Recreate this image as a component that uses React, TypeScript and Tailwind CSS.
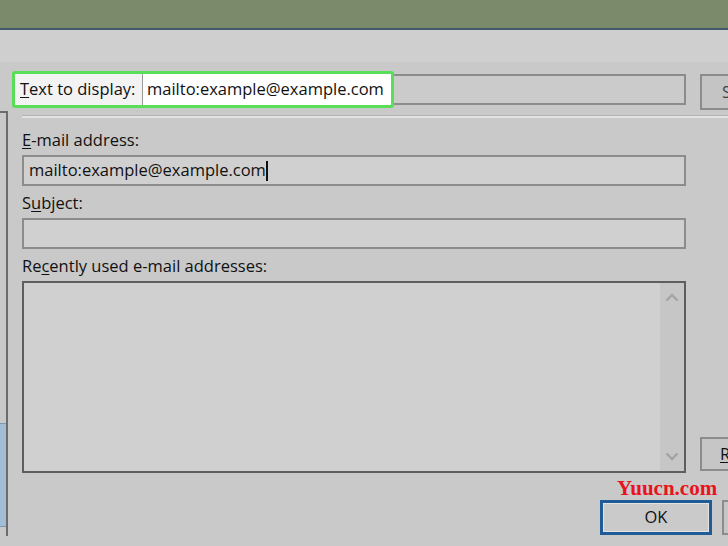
import React from "react";

const ui = { fontFamily: '"Open Sans", "Noto Sans", sans-serif' };

function Field(props: { children?: React.ReactNode; className?: string }) {
  return (
    <div
      className={
        "h-[31px] flex items-center border-2 border-[#8c8c8c] bg-[#d0d0d0] px-[4px] " +
        (props.className ?? "")
      }
    >
      {props.children}
    </div>
  );
}

function Chevron(props: { down?: boolean }) {
  return (
    <svg width="14" height="9" viewBox="0 0 14 9" className="text-[#a4a4a4]">
      <path
        d={props.down ? "M1.5 1.5 L7 7 L12.5 1.5" : "M1.5 7.5 L7 2 L12.5 7.5"}
        fill="none"
        stroke="currentColor"
        strokeWidth="2.4"
      />
    </svg>
  );
}

export default function App() {
  return (
    <div
      className="relative w-[728px] h-[546px] overflow-hidden bg-[#c9c9c9] text-[#111] text-[16.5px] whitespace-nowrap"
      style={ui}
    >
      {/* window title strip */}
      <div className="h-[30px] bg-[#7a8a6a] border-b-2 border-[#41596a]" />
      <div className="h-[32px] bg-[#cfcfcf]" />

      {/* text to display row */}
      <div className="flex items-start pl-[12px] mt-[9px]">
        <div className="flex shrink-0 h-[37px] border-[3px] border-[#5ade5a] rounded-[3px] bg-white">
          <div className="flex items-center w-[128px] shrink-0 bg-[#f3f3f3] pl-[5px] border-r border-[#9a9a9a]">
            <span>
              <span className="underline underline-offset-2">T</span>ext to display:
            </span>
          </div>
          <div className="flex items-center pl-[4px] w-[248px] shrink-0">
            mailto:example@example.com
          </div>
        </div>
        <div className="shrink-0 mt-[3px] h-[31px] w-[292px] border-2 border-l-0 border-[#8c8c8c] bg-[#cbcbcb]" />
        <div className="shrink-0 ml-[14px] mt-[3px] h-[36px] w-[40px] border-2 border-[#8c8c8c] bg-[#c4c4c4] flex items-center pl-[20px] text-[#444]">
          S
        </div>
      </div>

      {/* body */}
      <div className="flex mt-[1px]">
        <div className="w-[8px] shrink-0 h-[425px] border-t-2 border-r-2 border-[#6c6c6c] flex flex-col">
          <div className="h-[310px]" />
          <div className="h-[104px] bg-[#a3bdd6] border-y border-[#7d98b4]" />
        </div>

        <div className="w-[678px] shrink-0 pl-[14px] pt-[4px]">
          <div className="h-[3px] border-t border-[#b4b4b4] bg-[#e2e2e2] -mr-[50px]" />

          <div className="w-[664px]">
            <div className="mt-[10px] h-[24px] leading-[24px]">
              <span className="underline underline-offset-2">E</span>-mail address:
            </div>
            <Field className="mt-[3px]">
              <span className="pl-[1px]">mailto:example@example.com</span>
              <span className="w-[2px] h-[20px] bg-[#111]" />
            </Field>

            <div className="mt-[5px] h-[24px] leading-[24px]">
              S<span className="underline underline-offset-2">u</span>bject:
            </div>
            <Field className="mt-[3px]" />

            <div className="mt-[5px] h-[24px] leading-[24px]">
              Re<span className="underline underline-offset-2">c</span>ently used e-mail addresses:
            </div>
            <div className="mt-[3px] h-[192px] border-2 border-[#5e5e5e] bg-[#d0d0d0] flex justify-end">
              <div className="w-[24px] bg-[#c6c6c6] flex flex-col items-center justify-between py-[10px]">
                <Chevron />
                <Chevron down />
              </div>
            </div>
          </div>
        </div>

        <div className="ml-[14px] w-[40px] shrink-0 pt-[326px]">
          <div className="h-[34px] border-2 border-[#8c8c8c] bg-[#c6c6c6] flex items-center pl-[18px]">
            <span className="underline underline-offset-2">R</span>
          </div>
        </div>
      </div>

      {/* bottom buttons */}
      <div className="absolute left-[600px] top-[500px] flex gap-[10px]">
        <div className="w-[112px] h-[35px] border-[3px] border-[#1f5a99] bg-[#cacaca] flex items-center justify-center">
          <div className="w-full h-full border border-[#e4e4e4] flex items-center justify-center">
            OK
          </div>
        </div>
        <div className="w-[40px] h-[35px] border-2 border-[#8c8c8c] bg-[#c6c6c6]" />
      </div>

      {/* watermark */}
      <div
        className="absolute left-[617px] top-[478px] text-[21px] font-bold text-[#e8141c] leading-none"
        style={{ fontFamily: '"Liberation Serif", serif' }}
      >
        Yuucn.com
      </div>
    </div>
  );
}
